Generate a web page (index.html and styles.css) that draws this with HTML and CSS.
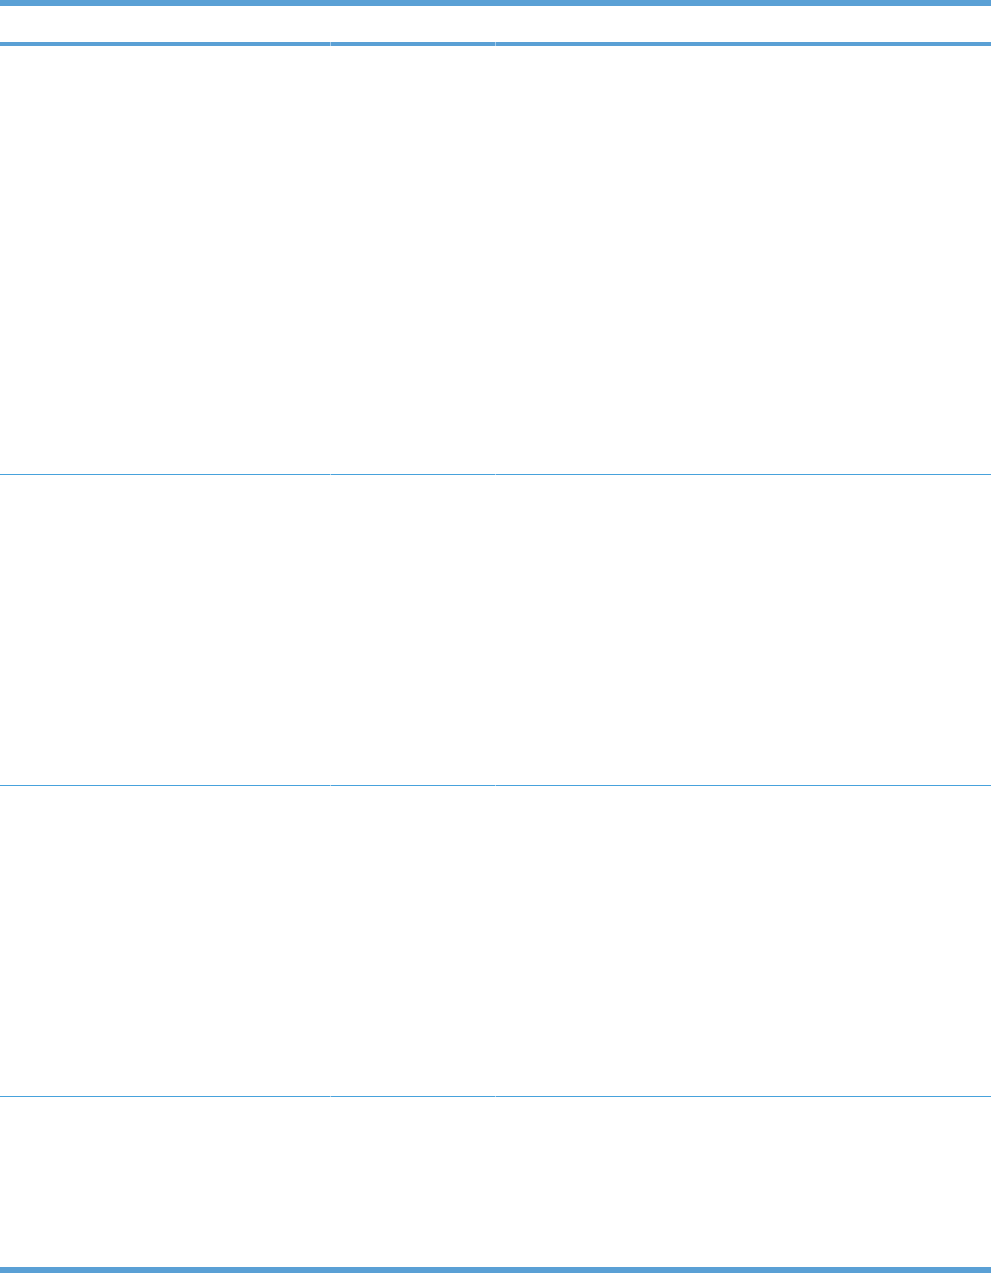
FILE: index.html
```html
<!DOCTYPE html>
<html lang="en">
<head>
    <meta charset="UTF-8">
    <meta name="viewport" content="width=device-width, initial-scale=1.0">
    <title>Table</title>
    <link rel="stylesheet" href="styles.css">
</head>
<body>
    <div class="sheet">
        <div class="rule-top"></div>

        <!-- Header row -->
        <div class="row head">
            <div class="cell"></div>
            <div class="cell"></div>
            <div class="cell"></div>
        </div>

        <!-- Body rows -->
        <div class="row r1">
            <div class="cell"></div>
            <div class="cell"></div>
            <div class="cell"></div>
        </div>
        <div class="row r2">
            <div class="cell"></div>
            <div class="cell"></div>
            <div class="cell"></div>
        </div>
        <div class="row r2">
            <div class="cell"></div>
            <div class="cell"></div>
            <div class="cell"></div>
        </div>
        <div class="row r4 last">
            <div class="cell"></div>
            <div class="cell"></div>
            <div class="cell"></div>
        </div>

        <div class="rule-bottom"></div>
    </div>
</body>
</html>
```

FILE: styles.css
```css
body {
    margin: 0;
    background: #fff;
    font-family: "Liberation Sans", Arial, sans-serif;
}
.sheet {
    width: 991px;
}
.rule-top,
.rule-bottom {
    height: 6px;
    background: #5aa0d5;
}
.row {
    display: grid;
    grid-template-columns: 330px 164px 1fr;
    column-gap: 1px;
    /* faint tint where the column gap crosses the rule */
    background: linear-gradient(to top, #a9d1ee 1px, transparent 1px);
}
.cell {
    border-bottom: 1px solid #48a2dc;
}
.head {
    background: linear-gradient(to top, #a4cbea 4px, transparent 4px);
}
.head .cell {
    height: 36px;
    border-bottom: 4px solid #5aa0d5;
}
.r1 .cell {
    height: 428px;
}
.r2 .cell {
    height: 310px;
}
.r4 .cell {
    height: 170px;
}
.last {
    background: none;
}
.last .cell {
    border-bottom: none;
}
```
